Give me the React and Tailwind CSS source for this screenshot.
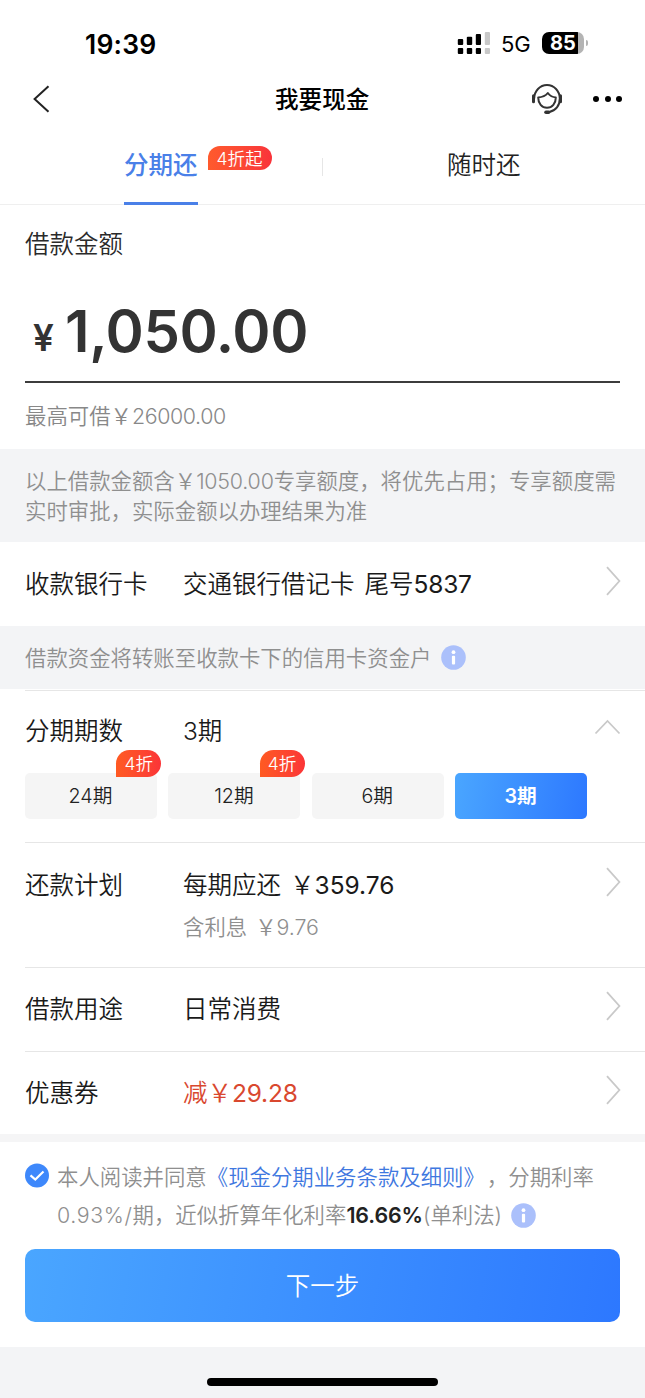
import React from "react";

function Chevron({ className = "" }) {
  return (
    <svg className={`h-[30px] w-[16px] shrink-0 ${className}`} viewBox="0 0 16 30" fill="none" stroke="#c9c9c9" strokeWidth="1.8">
      <path d="M2 1.2 14.4 15 2 28.8" />
    </svg>
  );
}

function InfoIcon() {
  return (
    <svg className="h-[25px] w-[25px] shrink-0" viewBox="0 0 25 25">
      <circle cx="12.5" cy="12.5" r="12.3" fill="#abc0fb" />
      <circle cx="12.5" cy="7.2" r="1.9" fill="#fff" />
      <rect x="10.9" y="10.7" width="3.2" height="8.8" rx="1" fill="#fff" />
    </svg>
  );
}

function Num({ children, className = "tracking-[-0.2px]" }) {
  return <span className={className}>{children}</span>;
}

function StatusBar() {
  return (
    <div className="flex h-[70px] items-start text-black">
      <div className="ml-[85px] mt-[29px] w-[372px] text-[26.5px] font-semibold leading-[30px] tracking-[0.2px]">19:39</div>
      <svg className="mt-[32px] h-[22px] w-[33px]" viewBox="0 0 33 22">
        <g fill="#000">
          <rect x="0.8" y="7" width="5.4" height="6" rx="1" />
          <rect x="0.8" y="16" width="5.4" height="6" rx="1" />
          <rect x="9.8" y="4.8" width="5.4" height="8.2" rx="1" />
          <rect x="9.8" y="16" width="5.4" height="6" rx="1" />
          <rect x="18.8" y="2" width="5.2" height="11" rx="1" />
          <rect x="18.8" y="16" width="5.2" height="6" rx="1" />
        </g>
        <g fill="#c8c8c8">
          <rect x="27.8" y="0" width="5.2" height="13" rx="1" />
          <rect x="27.8" y="16" width="5.2" height="6" rx="1" />
        </g>
      </svg>
      <div className="ml-[11px] mt-[29px] w-[41px] text-[22px] font-normal leading-[30px]">5G</div>
      <div className="mt-[32px] flex h-[22px] w-[42px] items-center justify-center overflow-hidden rounded-[7px] bg-[linear-gradient(to_right,#000_36px,#b4b4b4_36px)] text-[20px] font-bold leading-[22px] text-white">
        85
      </div>
      <div className="ml-[2px] mt-[40px] h-[6px] w-[2px] rounded-r-full bg-[#b4b4b4]" />
    </div>
  );
}

function NavBar() {
  return (
    <div className="flex h-[58px] items-center">
      <svg className="ml-[33px] h-[28px] w-[17px]" viewBox="0 0 17 28" fill="none" stroke="#222" strokeWidth="2">
        <path d="M15.5 1.2 1.6 14 15.5 26.8" />
      </svg>
      <h1 className="ml-[225px] mt-[2px] w-[256px] text-[23.6px] font-medium leading-[30px] text-black">我要现金</h1>
      <svg className="h-[32px] w-[32px]" viewBox="0 0 32 32" fill="none" stroke="#333" strokeWidth="2">
        <path d="M3.2 15.5a12.8 13.5 0 0 1 25.6 0c0 7-4 12.300-10.600 13.500" />
        <path d="M2.500 12.800v6M29.500 12.800v6" strokeWidth="3" strokeLinecap="round" />
        <path d="M17.600 29.200h-2.600" strokeWidth="3.600" strokeLinecap="round" />
        <path d="M7.200 14.400c4.200-.2 7.400-1.600 9.600-4.400 2.200 2.800 4.600 4.200 8 4.400 0 6.100-3.600 10.300-8.800 10.300s-8.800-4.200-8.800-10.300z" strokeLinejoin="round" />
      </svg>
      <div className="ml-[30px] flex gap-[5.5px]">
        <i className="h-[6px] w-[6px] rounded-full bg-black" />
        <i className="h-[6px] w-[6px] rounded-full bg-black" />
        <i className="h-[6px] w-[6px] rounded-full bg-black" />
      </div>
    </div>
  );
}

function Tabs() {
  return (
    <div className="flex h-[77px] items-start border-b border-[#efefef] text-[24.5px] leading-[30px]">
      <div className="relative ml-[124px] h-[77px] w-[74px] border-b-[3px] border-[#4a80e8] pt-[22px] font-medium text-[#4a80e8]">
        分期还
        <span className="absolute left-[84px] top-[18px] h-[24px] w-[64px] whitespace-nowrap rounded-[12px] rounded-bl-none bg-linear-to-r from-[#ff5a2d] to-[#f9333a] pr-[1px] text-center text-[17.5px] font-[350] leading-[25px] text-white">
          4折起
        </span>
      </div>
      <div className="ml-[124px] mt-[30px] h-[18px] w-px bg-[#e6e6e6]" />
      <div className="ml-[124px] pt-[22px] text-[#222]">随时还</div>
    </div>
  );
}

function Row({ label, children, arrow = true, className }) {
  return (
    <div className={`flex items-start pr-[24px] text-[24.5px] leading-[30px] text-[#1a1a1a] ${className}`}>
      <div className="w-[158px] shrink-0">{label}</div>
      <div className="grow whitespace-nowrap">{children}</div>
      {arrow && <Chevron className="-mt-[3px]" />}
    </div>
  );
}

const terms = [
  { label: "24", badge: true },
  { label: "12", badge: true },
  { label: "6" },
  { label: "3", active: true },
];

export default function App() {
  return (
    <div className="h-[1398px] w-[645px] overflow-hidden bg-white font-['Inter','Noto_Sans_CJK_SC',sans-serif] font-[350] [text-spacing-trim:space-all]">
      <StatusBar />
      <NavBar />
      <Tabs />

      <section className="h-[244px] px-[25px] pt-[24px]">
        <div className="text-[24.5px] leading-[30px] text-[#2a2a2a]">借款金额</div>
        <div className="mt-[34px] flex h-[90px] items-baseline border-b-2 border-[#3c3c3c] font-semibold leading-[76px] text-[#333]">
          <span className="relative -top-px ml-[8px] w-[32px] text-[37px]">¥</span>
          <span className="text-[58px] tracking-[-0.4px]">1,050.00</span>
        </div>
        <div className="mt-[18px] text-[21.4px] leading-[30px] text-[#888]">
          最高可借￥<Num className="tracking-[-0.4px]">26000.00</Num>
        </div>
      </section>

      <div className="h-[93px] whitespace-nowrap bg-[#f3f4f6] px-[25px] pt-[17px] text-[21.4px] leading-[30px] text-[#8f8f8f]">
        以上借款金额含￥<Num>1050.00</Num>专享额度，将优先占用；专享额度需
        <br />
        实时审批，实际金额以办理结果为准
      </div>

      <Row label="收款银行卡" className="h-[84px] pl-[25px] pt-[27px]">
        交通银行借记卡<span className="ml-[10px]">尾号</span><Num className="font-normal tracking-[-0.2px]">5837</Num>
      </Row>

      <div className="flex h-[63px] items-center gap-[10px] bg-[#f3f4f6] pl-[25px] text-[21.4px] leading-[30px] text-[#8f8f8f]">
        <span>借款资金将转账至收款卡下的信用卡资金户</span>
        <InfoIcon />
      </div>

      <section className="ml-[25px] mt-px h-[152px] border-t border-[#e6e6e6] pt-[25px]">
        <div className="flex h-[30px] items-start text-[24.5px] leading-[30px] text-[#1a1a1a]">
          <div className="w-[158px]">分期期数</div>
          <div className="w-[411px]">3期</div>
          <svg className="mt-[3px] h-[16px] w-[27px]" viewBox="0 0 27 16" fill="none" stroke="#c9c9c9" strokeWidth="1.8">
            <path d="M1.5 14.5 13.5 2 25.5 14.5" />
          </svg>
        </div>
        <div className="mt-[27px] flex gap-[11.4px]">
          {terms.map((t) => (
            <div
              key={t.label}
              className={`relative h-[46px] w-[132px] rounded-[5px] pr-[1px] text-center text-[19.7px] leading-[46px] ${
                t.active ? "bg-[linear-gradient(100deg,#4aa6ff,#2d78ff)] font-semibold text-white" : "bg-[#f5f5f5] text-[#222]"
              }`}
            >
              {t.label}期
              {t.badge && (
                <span className="absolute -top-[23px] left-[91.2px] h-[27px] w-[45px] rounded-[13.5px] rounded-bl-none bg-linear-to-r from-[#ff5a22] to-[#fb3437] text-[17.5px] leading-[28px] text-white">
                  4折
                </span>
              )}
            </div>
          ))}
        </div>
      </section>

      <Row label="还款计划" className="ml-[25px] h-[125px] border-t border-[#e6e6e6] pt-[27px]">
        每期应还<span className="ml-[9px]">￥</span><Num className="font-normal tracking-[0px]">359.76</Num>
        <div className="mt-[12px] text-[21.4px] text-[#8f8f8f]">
          含利息<span className="ml-[8px]">￥</span><Num className="tracking-[-0.1px]">9.76</Num>
        </div>
      </Row>
      <Row label="借款用途" className="ml-[25px] h-[84px] border-t border-[#e6e6e6] pt-[26px]">
        日常消费
      </Row>
      <Row label="优惠券" className="ml-[25px] h-[83px] border-t border-[#e6e6e6] pt-[26px]">
        <span className="text-[#d9482f]">
          减￥<Num className="font-normal tracking-[-0.2px]">29.28</Num>
        </span>
      </Row>

      <div className="h-[8px] bg-[#f5f5f6]" />

      <section className="h-[107px] pl-[25px] pt-[16px] text-[21.4px] leading-[38px] text-[#8f8f8f]">
        <div className="flex items-start">
          <svg className="mt-[5px] h-[25px] w-[24px] shrink-0" viewBox="0 0 24 25">
            <circle cx="12" cy="12.5" r="12" fill="#3e88fb" />
            <path d="M5.5 12.3 10.3 16.5 18.5 8.5" fill="none" stroke="#fff" strokeWidth="2.2" />
          </svg>
          <div className="ml-[8px] whitespace-nowrap">
            本人阅读并同意<span className="mr-[2px] text-[#3f78e0]">《现金分期业务条款及细则》</span>，分期利率
            <div className="flex items-center">
              <span>
                <Num className="tracking-[0.6px]">0.93%/</Num>期，近似折算年化利率<span className="font-semibold tracking-[-0.1px] text-[#222]">16.66%</span>(单利法)
              </span>
              <span className="ml-[9px]">
                <InfoIcon />
              </span>
            </div>
          </div>
        </div>
      </section>

      <button className="mx-[25px] block h-[73px] w-[595px] rounded-[10px] bg-[linear-gradient(100deg,#4aa6ff,#2d78ff)] text-[24.5px] leading-[75px] text-white">
        下一步
      </button>

      <footer className="mt-[25px] flex h-[51px] justify-center bg-[#f3f4f6] pt-[31px]">
        <div className="h-[8px] w-[231px] rounded-full bg-black" />
      </footer>
    </div>
  );
}
